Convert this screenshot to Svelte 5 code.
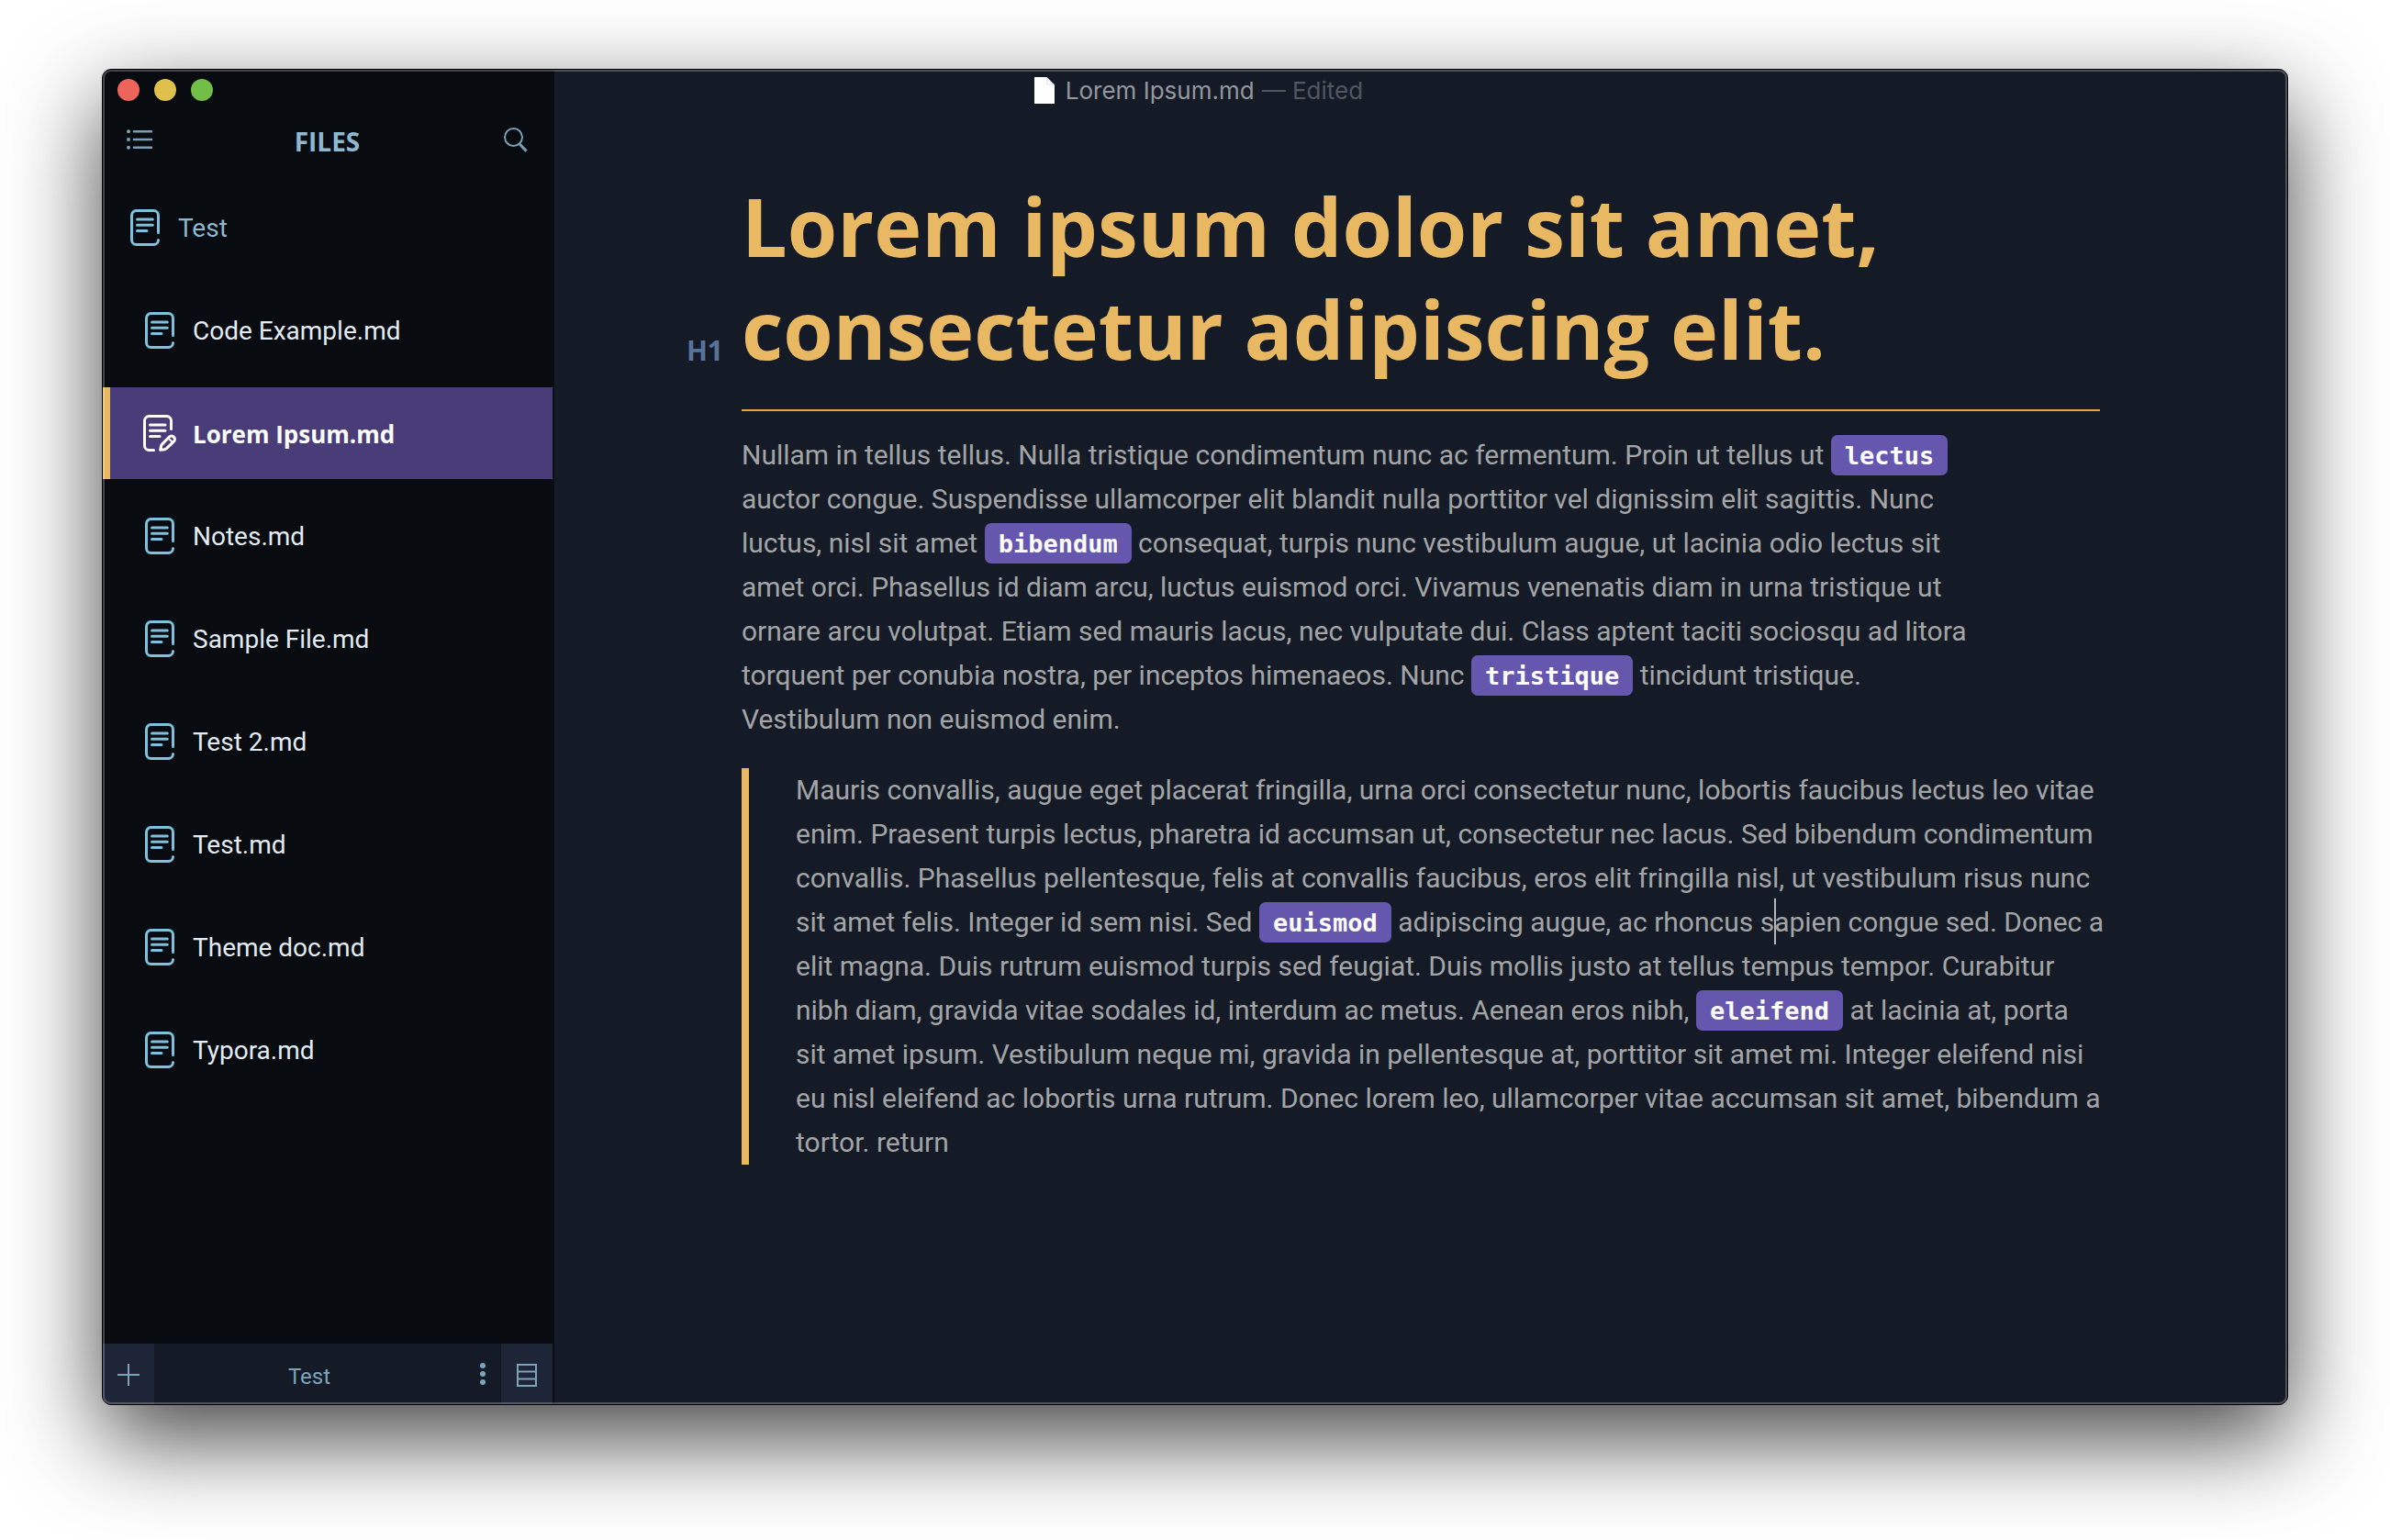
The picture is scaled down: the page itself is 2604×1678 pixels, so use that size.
<script>
  const files = [
    'Code Example.md',
    'Lorem Ipsum.md',
    'Notes.md',
    'Sample File.md',
    'Test 2.md',
    'Test.md',
    'Theme doc.md',
    'Typora.md'
  ];
  let active = $state('Lorem Ipsum.md');

  // Backticks mark inline code, a pipe marks the text caret.
  const parse = (text) =>
    text.split('\n').map((line) =>
      line
        .split(/(`[^`]+`|\|)/)
        .filter(Boolean)
        .map((s) =>
          s === '|' ? { caret: true } : s[0] === '`' ? { code: s.slice(1, -1) } : { text: s }
        )
    );

  const intro = parse(`Nullam in tellus tellus. Nulla tristique condimentum nunc ac fermentum. Proin ut tellus ut \`lectus\`
auctor congue. Suspendisse ullamcorper elit blandit nulla porttitor vel dignissim elit sagittis. Nunc
luctus, nisl sit amet \`bibendum\` consequat, turpis nunc vestibulum augue, ut lacinia odio lectus sit
amet orci. Phasellus id diam arcu, luctus euismod orci. Vivamus venenatis diam in urna tristique ut
ornare arcu volutpat. Etiam sed mauris lacus, nec vulputate dui. Class aptent taciti sociosqu ad litora
torquent per conubia nostra, per inceptos himenaeos. Nunc \`tristique\` tincidunt tristique.
Vestibulum non euismod enim.`);

  const quote = parse(`Mauris convallis, augue eget placerat fringilla, urna orci consectetur nunc, lobortis faucibus lectus leo vitae
enim. Praesent turpis lectus, pharetra id accumsan ut, consectetur nec lacus. Sed bibendum condimentum
convallis. Phasellus pellentesque, felis at convallis faucibus, eros elit fringilla nisl, ut vestibulum risus nunc
sit amet felis. Integer id sem nisi. Sed \`euismod\` adipiscing augue, ac rhoncus s|apien congue sed. Donec a
elit magna. Duis rutrum euismod turpis sed feugiat. Duis mollis justo at tellus tempus tempor. Curabitur
nibh diam, gravida vitae sodales id, interdum ac metus. Aenean eros nibh, \`eleifend\` at lacinia at, porta
sit amet ipsum. Vestibulum neque mi, gravida in pellentesque at, porttitor sit amet mi. Integer eleifend nisi
eu nisl eleifend ac lobortis urna rutrum. Donec lorem leo, ullamcorper vitae accumsan sit amet, bibendum a
tortor. return`);
</script>

{#snippet docIcon(editing)}
  <svg class="doc" viewBox="0 0 36 40" aria-hidden="true">
    {#if editing}
      <path d="M30.5 15.5V6.5a5 5 0 0 0-5-5h-19a5 5 0 0 0-5 5v27a5 5 0 0 0 5 5h5" />
      <path d="M7.5 11h16.5M7.5 17.2h16.5M7.5 23.4h10.5" />
      <path d="M18.7 38.3l.8-4.2c.2-.8.5-1.4 1.1-2l7.8-8a3.5 3.5 0 0 1 5 0 3.5 3.5 0 0 1 0 5l-8 7.6c-.6.5-1.2.8-2 1z" />
      <path class="thin" d="M27.4 25.4l4.4 4.4" />
    {:else}
      <path d="M32.5 25.5v-19a5 5 0 0 0-5-5h-19a5 5 0 0 0-5 5v27a5 5 0 0 0 5 5h19a5 5 0 0 0 5-5" />
      <path d="M9.5 11h16.8M9.5 17.2h16.8M9.5 23.4h10.5" />
    {/if}
  </svg>
{/snippet}

{#snippet prose(lines)}
  {#each lines as line}
    <span class="line">{#each line as s}{#if s.code}<code>{s.code}</code>{:else if s.caret}<span class="caret"></span>{:else}{s.text}{/if}{/each}</span>
  {/each}
{/snippet}

<div class="desktop">
  <div class="window">
    <header class="titlebar">
      <div class="lights">
        <button class="light close" aria-label="Close"></button>
        <button class="light minimise" aria-label="Minimise"></button>
        <button class="light zoom" aria-label="Zoom"></button>
      </div>
      <div class="title">
        <svg class="page" viewBox="0 0 22 29" aria-hidden="true">
          <path fill="#fff" d="M0 0h13.5L22 8.5V29H0z" />
          <path fill="#e4e4e6" d="M13.5 0v8.5H22z" />
          <path fill="#fff" d="M14.5 2.5v5h5z" />
        </svg>
        <span class="name">Lorem Ipsum.md</span>
        <span class="edited">— Edited</span>
      </div>
    </header>

    <aside class="sidebar">
      <div class="tools">
        <button class="tool" aria-label="Outline">
          <svg width="28" height="22" viewBox="0 0 28 22" aria-hidden="true">
            <g fill="currentColor"><circle cx="2" cy="2.3" r="2" /><circle cx="2" cy="11" r="2" /><circle cx="2" cy="19.7" r="2" /></g>
            <path d="M8 2.3h19M8 11h19M8 19.7h19" stroke="currentColor" stroke-width="2.6" stroke-linecap="round" />
          </svg>
        </button>
        <h2>FILES</h2>
        <button class="tool end" aria-label="Search">
          <svg width="26" height="27" viewBox="0 0 26 27" fill="none" stroke="currentColor" aria-hidden="true">
            <circle cx="10.5" cy="10.5" r="9.5" stroke-width="2" />
            <path d="M17.2 18l7.3 7.6" stroke-width="3" />
          </svg>
        </button>
      </div>

      <nav class="files">
        <button class="file root">{@render docIcon(false)}<span class="label">Test</span></button>
        {#each files as name}
          <button class="file" class:active={name === active} onclick={() => (active = name)}>
            {@render docIcon(name === active)}<span class="label">{name}</span>
          </button>
        {/each}
      </nav>

      <footer class="bar">
        <button class="square" aria-label="New file">
          <svg width="24" height="24" viewBox="0 0 24 24" aria-hidden="true">
            <path d="M12 0v24M0 12h24" stroke="currentColor" stroke-width="2" />
          </svg>
        </button>
        <span class="folder">Test</span>
        <button class="more" aria-label="More">
          <svg width="6" height="24" viewBox="0 0 6 24" fill="currentColor" aria-hidden="true">
            <circle cx="3" cy="3" r="3" /><circle cx="3" cy="12" r="3" /><circle cx="3" cy="21" r="3" />
          </svg>
        </button>
        <button class="square" aria-label="List view">
          <svg width="22" height="25" viewBox="0 0 22 25" fill="none" stroke="currentColor" stroke-width="2" aria-hidden="true">
            <path d="M1 1h20v23H1zM1 8.5h20M1 16.5h20" />
          </svg>
        </button>
      </footer>
    </aside>

    <main class="editor">
      <article>
        <h1><span class="level">H1</span>Lorem ipsum dolor sit amet,<br />consectetur adipiscing elit.</h1>
        <p>{@render prose(intro)}</p>
        <blockquote>{@render prose(quote)}</blockquote>
      </article>
    </main>
  </div>
</div>

<style>
  :global(body) {
    margin: 0;
    background: #fff;
  }
  .desktop {
    box-sizing: border-box;
    min-height: 100vh;
    padding: 75px 111px 147px;
    display: flex;
    overflow: hidden;
    font-family: Roboto, 'Open Sans', sans-serif;
  }
  .window {
    position: relative;
    flex: 1;
    display: grid;
    grid-template-columns: 492px 1fr;
    grid-template-rows: 44px 1fr;
    border: 1px solid #000;
    border-radius: 10px;
    background: #141b27;
    box-shadow: 0 36px 100px rgba(0, 0, 0, 0.74);
  }
  .window::after {
    content: '';
    position: absolute;
    inset: 0;
    border: 2px solid rgba(255, 255, 255, 0.24);
    border-radius: 9px;
    pointer-events: none;
    z-index: 2;
  }
  button {
    border: 0;
    padding: 0;
    background: none;
    font: inherit;
    color: inherit;
    cursor: pointer;
  }
  svg {
    display: block;
    flex: none;
  }

  .titlebar {
    grid-area: 1 / 1 / 2 / 3;
    z-index: 1;
    display: grid;
    grid-template-columns: 1fr auto 1fr;
    align-items: center;
    padding: 0 16px;
  }
  .lights {
    display: flex;
    gap: 16px;
  }
  .light {
    width: 24px;
    height: 24px;
    border-radius: 50%;
  }
  .close {
    background: #ed655a;
  }
  .minimise {
    background: #e0c04c;
  }
  .zoom {
    background: #72be47;
  }
  .title {
    display: flex;
    align-items: center;
    padding-left: 8px;
    font: 26px/32px Inter, sans-serif;
    color: #94979c;
  }
  .page {
    width: 22px;
    height: 29px;
    margin-right: 12px;
  }
  .name,
  .edited {
    padding-top: 2px;
  }
  .edited {
    margin-left: 8px;
    color: #51565f;
  }

  .sidebar {
    grid-area: 1 / 1 / 3 / 2;
    display: flex;
    flex-direction: column;
    padding-top: 44px;
    border-right: 2px solid #0a0d13;
    border-radius: 9px 0 0 9px;
    background: #080b0f;
    overflow: hidden;
  }
  .tools {
    display: grid;
    grid-template-columns: 1fr auto 1fr;
    align-items: center;
    height: 64px;
    padding: 0 27px 0 26px;
    color: #7b9fb4;
  }
  .end {
    justify-self: end;
  }
  h2 {
    margin: 0;
    padding-top: 4px;
    font-family: 'Open Sans', sans-serif;
    font-size: 28px;
    line-height: 32px;
    font-weight: 700;
    color: #8cb8d0;
  }
  .files {
    flex: 1;
    display: flex;
    flex-direction: column;
    gap: 12px;
    padding-top: 14px;
  }
  .file {
    display: flex;
    align-items: center;
    gap: 18px;
    height: 100px;
    padding-left: 36px;
    border-left: 8px solid transparent;
    font-size: 28px;
    line-height: 40px;
    color: #e2ebf3;
    text-align: left;
  }
  .label {
    padding-top: 2px;
  }
  .root {
    padding-left: 20px;
    color: #8cb8d0;
  }
  .active {
    border-color: #e8b863;
    background: #483d78;
    color: #fff;
    font-family: 'Open Sans', sans-serif;
    font-size: 26px;
    font-weight: 700;
  }
  .doc {
    width: 36px;
    height: 40px;
    fill: none;
    stroke: #7fc0dc;
    stroke-width: 3;
    stroke-linecap: round;
    stroke-linejoin: round;
  }
  .active .doc {
    stroke: #fff;
  }
  .thin {
    stroke-width: 2;
  }

  .bar {
    display: flex;
    height: 66px;
    background: #141b27;
    color: #7ba4ba;
    font-size: 24px;
    line-height: 32px;
  }
  .square {
    display: grid;
    place-items: center;
    width: 56px;
    padding-top: 2px;
    background: #1d2537;
  }
  .folder {
    flex: 1;
    align-self: center;
    padding-top: 6px;
    text-align: center;
  }
  .more {
    display: grid;
    place-items: center;
    width: 40px;
  }

  .editor {
    grid-area: 2 / 2 / 3 / 3;
    padding: 70px 96px 0;
    color: #a3a4a5;
  }
  article {
    max-width: 1480px;
    margin: 0 auto;
    font-size: 30px;
    line-height: 48px;
  }
  h1 {
    position: relative;
    margin: 0 0 24px;
    padding-bottom: 32px;
    border-bottom: 2px solid #eba346;
    font-family: 'Open Sans', sans-serif;
    font-size: 88px;
    line-height: 112px;
    font-weight: 700;
    color: #e8b863;
  }
  .level {
    position: absolute;
    right: calc(100% + 20px);
    bottom: 44px;
    font-size: 30px;
    line-height: 40px;
    font-weight: 700;
    color: #58739a;
  }
  p {
    margin: 0 0 29px;
  }
  blockquote {
    margin: 0;
    padding-left: 51px;
    border-left: 8px solid #e8b863;
  }
  .line {
    display: block;
    white-space: nowrap;
  }
  code {
    padding: 7px 15px 6px;
    border-radius: 7px;
    background: #6657ae;
    color: #fff;
    font: 700 27px/32px 'DejaVu Sans Mono', monospace;
  }
  .caret {
    position: relative;
  }
  .caret::after {
    content: '';
    position: absolute;
    top: -8px;
    left: 0;
    width: 2px;
    height: 50px;
    background: #b4b5b7;
  }
</style>
